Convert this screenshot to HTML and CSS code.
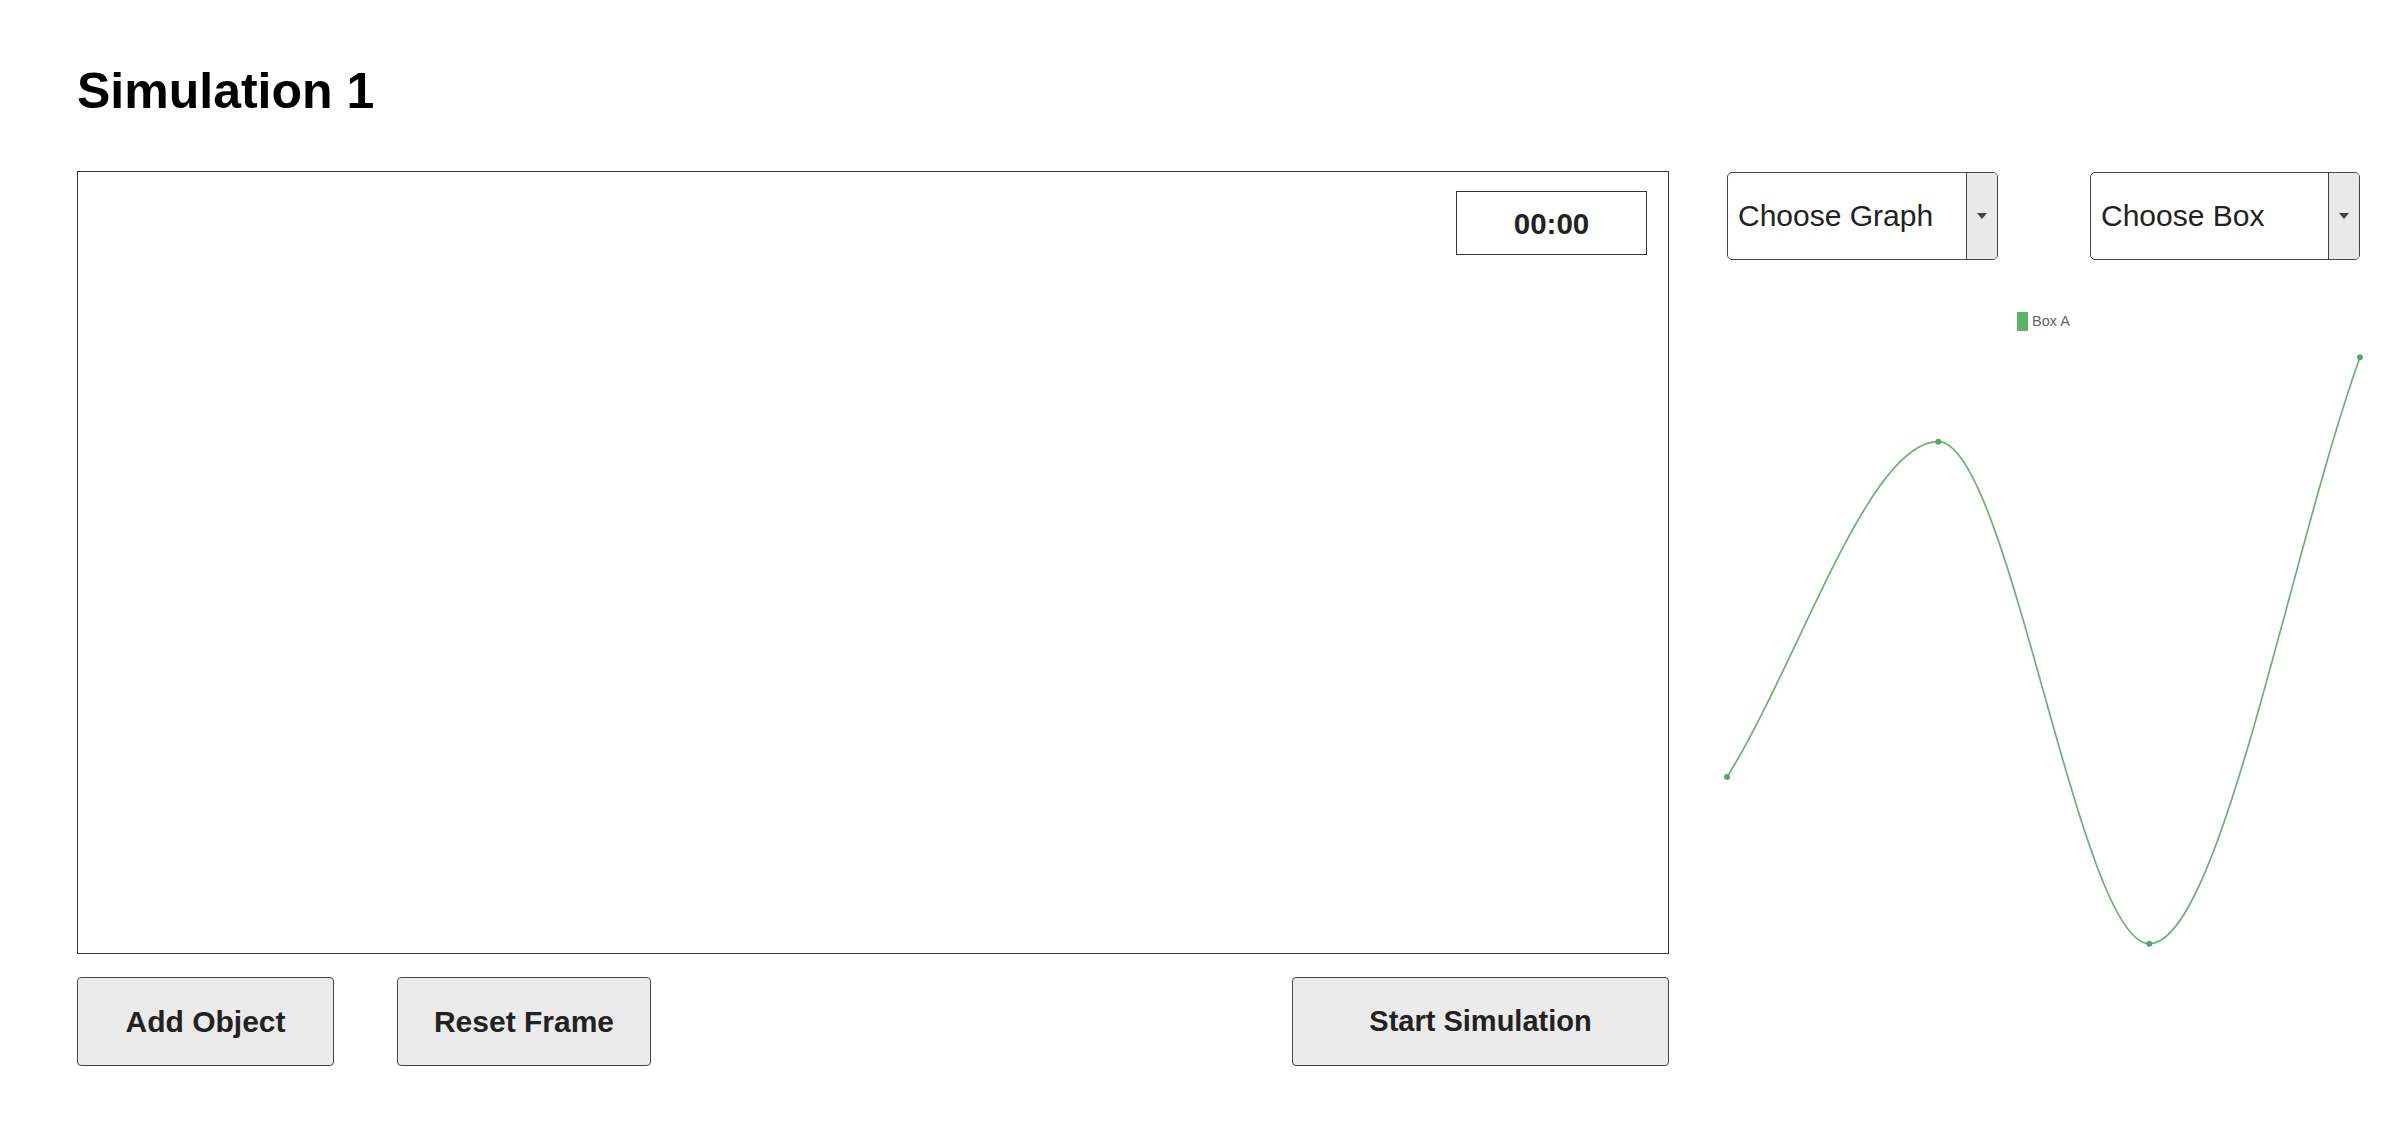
FILE: index.html
```html
<!DOCTYPE html>
<html lang="en">
<head>
<meta charset="utf-8">
<title>Simulation 1</title>
<link rel="stylesheet" href="styles.css">
</head>
<body>
<div class="page">
  <h1 class="title">Simulation 1</h1>
  <div class="main">
    <div class="left">
      <div class="stage">
        <div class="timer">00:00</div>
      </div>
      <div class="controls">
        <button class="btn btn-add">Add Object</button>
        <button class="btn btn-reset">Reset Frame</button>
        <button class="btn btn-start">Start Simulation</button>
      </div>
    </div>
    <div class="right">
      <div class="selects">
        <div class="select">
          <span class="select-label">Choose Graph</span>
          <span class="select-arrow"><svg width="10" height="6" viewBox="0 0 10 6"><path d="M0 0 H10 L5 6 Z" fill="#444"/></svg></span>
        </div>
        <div class="select">
          <span class="select-label">Choose Box</span>
          <span class="select-arrow"><svg width="10" height="6" viewBox="0 0 10 6"><path d="M0 0 H10 L5 6 Z" fill="#444"/></svg></span>
        </div>
      </div>
      <svg class="chart" width="633" height="700" viewBox="0 0 633 700">
        <rect x="290" y="52" width="11" height="19" fill="#5cb466"/>
        <text x="305" y="66" class="legend-text">Box A</text>
        <path d="M 0 517 C 70.4 405.2, 140.9 181.7, 211.3 181.7 C 281.6 181.7, 352 683.7, 422.3 683.7 C 492.5 683.7, 562.8 292.8, 633 97.3" fill="none" stroke="#66b46f" stroke-width="1.7"/>
        <circle cx="0" cy="517" r="3" fill="#52ab5e"/>
        <circle cx="211.3" cy="181.7" r="3" fill="#52ab5e"/>
        <circle cx="422.3" cy="683.7" r="3" fill="#52ab5e"/>
        <circle cx="633" cy="97.3" r="3" fill="#52ab5e"/>
      </svg>
    </div>
  </div>
</div>
</body>
</html>
```

FILE: styles.css
```css
* { box-sizing: border-box; }
html, body {
  margin: 0;
  padding: 0;
  background: #fff;
  font-family: "Liberation Sans", Arial, sans-serif;
}
.page {
  padding: 62px 0 0 77px;
}
.title {
  margin: 0 0 51px 0;
  font-size: 50px;
  line-height: 58px;
  font-weight: bold;
  color: #000;
}
.main {
  display: flex;
  gap: 58px;
  align-items: flex-start;
}
.left {
  width: 1592px;
}
.stage {
  height: 783px;
  border: 1px solid #333;
  display: flex;
  justify-content: flex-end;
  align-items: flex-start;
  padding: 19px 21px 0 0;
}
.timer {
  width: 191px;
  height: 64px;
  border: 1px solid #333;
  display: flex;
  align-items: center;
  justify-content: center;
  font-size: 29.5px;
  font-weight: bold;
  color: #222;
  padding-top: 2px;
}
.controls {
  margin-top: 23px;
  display: flex;
  align-items: flex-start;
}
.btn {
  height: 89px;
  background: #ebebeb;
  border: 1px solid #444;
  border-radius: 4px;
  font-family: "Liberation Sans", Arial, sans-serif;
  font-size: 30px;
  font-weight: bold;
  color: #222;
  padding: 0;
}
.btn-add { width: 257px; }
.btn-reset { width: 254px; margin-left: 63px; }
.btn-start { width: 377px; margin-left: auto; font-size: 29px; }
.right {
  width: 633px;
  margin-top: 1px;
}
.selects {
  display: flex;
  justify-content: space-between;
}
.select {
  width: 271px;
  height: 88px;
  border: 1px solid #444;
  border-radius: 5px;
  display: flex;
  align-items: stretch;
  overflow: hidden;
  background: #fff;
}
.select + .select { width: 270px; }
.select-label {
  flex: 1;
  display: flex;
  align-items: center;
  padding-left: 10px;
  font-size: 30px;
  color: #222;
}
.select-arrow {
  width: 31px;
  border-left: 1px solid #444;
  background: #e9e9e9;
  display: flex;
  align-items: center;
  justify-content: center;
}
.chart {
  display: block;
  overflow: visible;
}
.legend-text {
  font-family: "Liberation Sans", Arial, sans-serif;
  font-size: 14.5px;
  fill: #666;
}
```
